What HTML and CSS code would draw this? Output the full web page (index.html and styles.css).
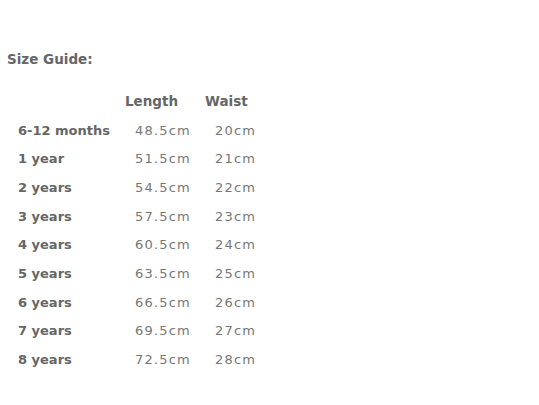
FILE: index.html
```html
<!DOCTYPE html>
<html>
<head>
<meta charset="utf-8">
<link rel="stylesheet" href="styles.css">
</head>
<body>
<div class="guide">
  <p class="title">Size Guide:</p>
  <table class="sizes">
    <thead>
      <tr><th></th><th class="len">Length</th><th class="wst">Waist</th></tr>
    </thead>
    <tbody>
      <tr><td class="age">6-12 months</td><td class="val">48.5cm</td><td class="val">20cm</td></tr>
      <tr><td class="age">1 year</td><td class="val">51.5cm</td><td class="val">21cm</td></tr>
      <tr><td class="age">2 years</td><td class="val">54.5cm</td><td class="val">22cm</td></tr>
      <tr><td class="age">3 years</td><td class="val">57.5cm</td><td class="val">23cm</td></tr>
      <tr><td class="age">4 years</td><td class="val">60.5cm</td><td class="val">24cm</td></tr>
      <tr><td class="age">5 years</td><td class="val">63.5cm</td><td class="val">25cm</td></tr>
      <tr><td class="age">6 years</td><td class="val">66.5cm</td><td class="val">26cm</td></tr>
      <tr><td class="age">7 years</td><td class="val">69.5cm</td><td class="val">27cm</td></tr>
      <tr><td class="age">8 years</td><td class="val">72.5cm</td><td class="val">28cm</td></tr>
    </tbody>
  </table>
</div>
</body>
</html>
```
FILE: styles.css
```css
html, body {
  margin: 0;
  background: #fff;
}
.guide {
  padding: 51px 0 0 7px;
  font-family: "DejaVu Sans", sans-serif;
  color: #666;
}
.title {
  margin: 0;
  font-size: 13.5px;
  font-weight: bold;
  line-height: 17px;
}
.sizes {
  border-collapse: collapse;
  margin-top: 19px;
}
.sizes th, .sizes td {
  padding: 0;
  height: 28.7px;
  text-align: left;
  vertical-align: middle;
  white-space: nowrap;
}
.sizes th {
  font-size: 13.5px;
  font-weight: bold;
}
.age {
  font-size: 13px;
  font-weight: bold;
  padding-left: 11px !important;
  width: 107px;
}
.len { width: 80px; }
.val {
  font-size: 13px;
  color: #777;
  letter-spacing: 1.2px;
  padding-left: 10px !important;
}
```
